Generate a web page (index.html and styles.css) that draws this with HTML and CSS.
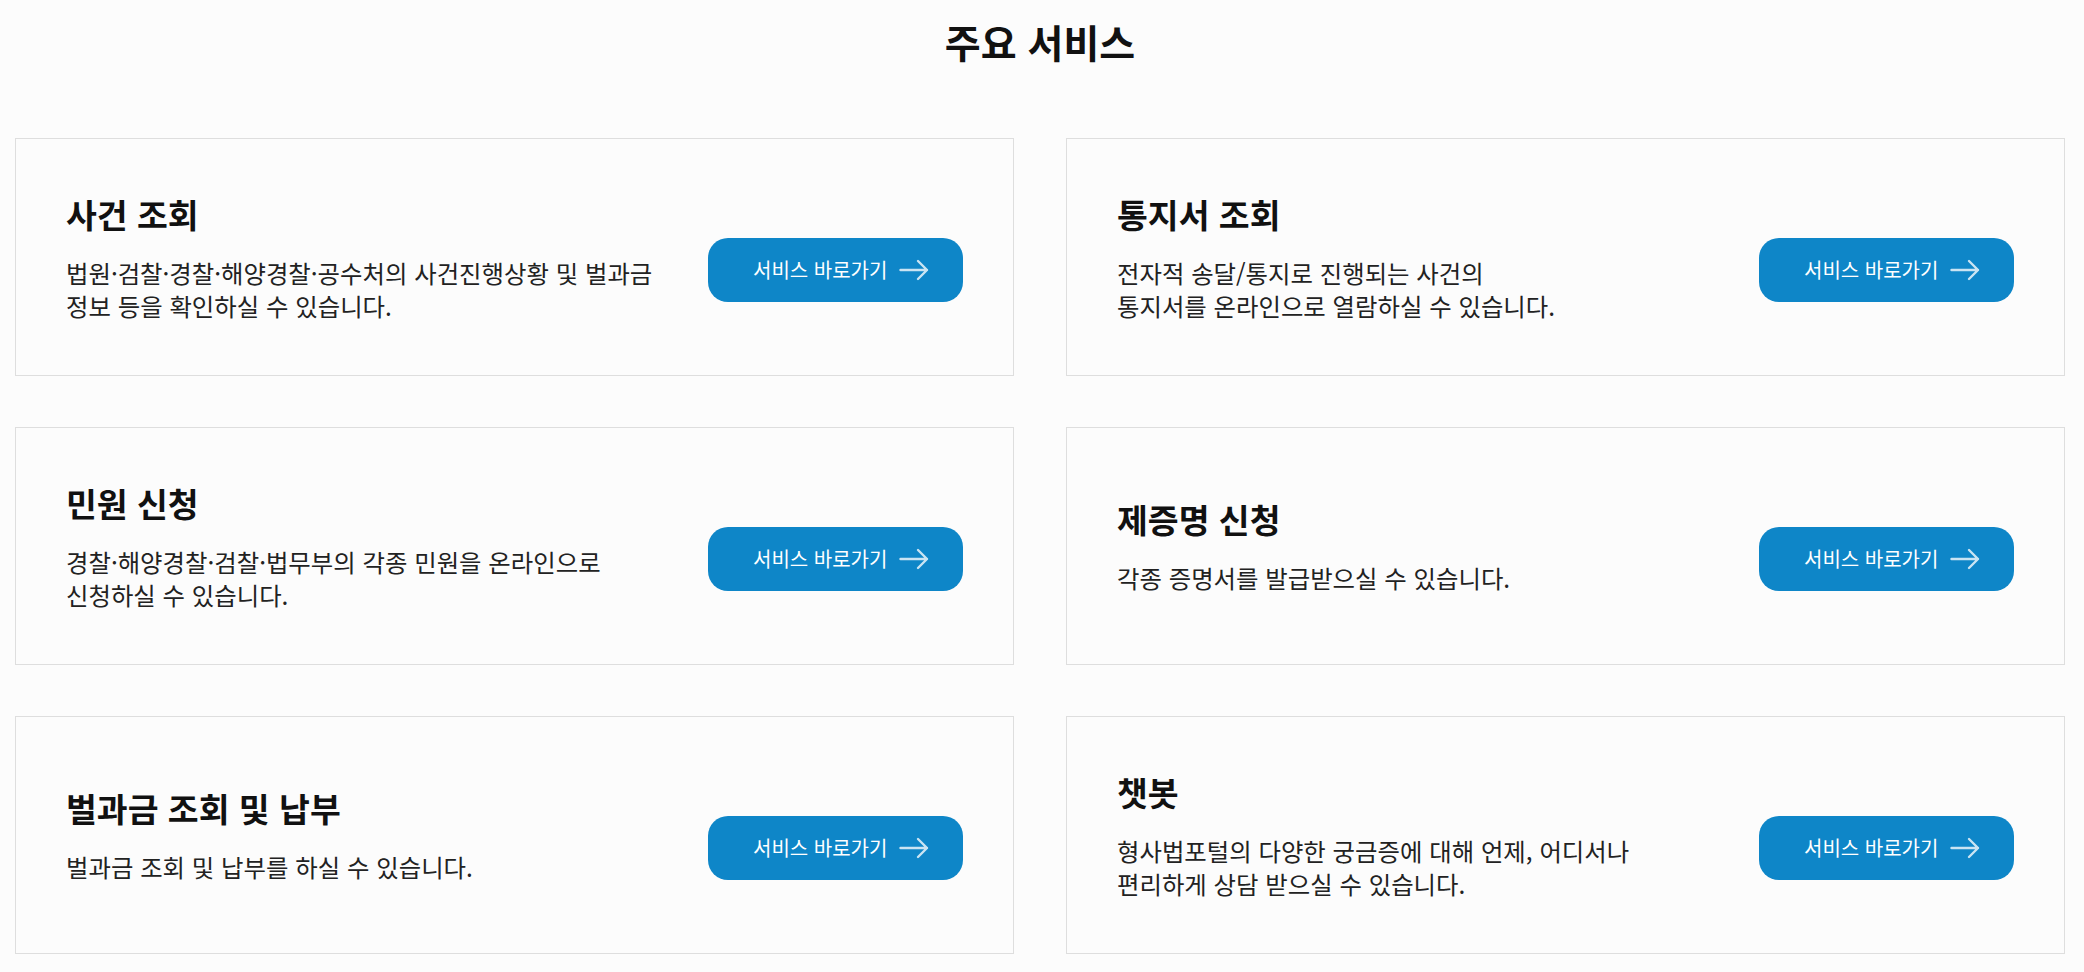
FILE: index.html
```html
<!DOCTYPE html>
<html lang="ko">
<head>
<meta charset="utf-8">
<title>주요 서비스</title>
<link rel="stylesheet" href="styles.css">
</head>
<body>
<main class="services">
  <h2 class="services-title">주요 서비스</h2>
  <ul class="services-grid">
    <li class="card">
      <div class="card-text">
        <h3 class="card-title">사건 조회</h3>
        <p class="card-desc">법원·검찰·경찰·해양경찰·공수처의 사건진행상황 및 벌과금<br>정보 등을 확인하실 수 있습니다.</p>
      </div>
      <a class="card-btn" href="#">서비스 바로가기<svg class="card-arrow" width="30" height="22" viewBox="0 0 30 22"><path d="M1.5 11H28M19 2L28 11L19 20" fill="none" stroke="currentColor" stroke-width="2.4" stroke-linecap="round" stroke-linejoin="round"/></svg></a>
    </li>
    <li class="card">
      <div class="card-text">
        <h3 class="card-title">통지서 조회</h3>
        <p class="card-desc">전자적 송달/통지로 진행되는 사건의<br>통지서를 온라인으로 열람하실 수 있습니다.</p>
      </div>
      <a class="card-btn" href="#">서비스 바로가기<svg class="card-arrow" width="30" height="22" viewBox="0 0 30 22"><path d="M1.5 11H28M19 2L28 11L19 20" fill="none" stroke="currentColor" stroke-width="2.4" stroke-linecap="round" stroke-linejoin="round"/></svg></a>
    </li>
    <li class="card">
      <div class="card-text">
        <h3 class="card-title">민원 신청</h3>
        <p class="card-desc">경찰·해양경찰·검찰·법무부의 각종 민원을 온라인으로<br>신청하실 수 있습니다.</p>
      </div>
      <a class="card-btn" href="#">서비스 바로가기<svg class="card-arrow" width="30" height="22" viewBox="0 0 30 22"><path d="M1.5 11H28M19 2L28 11L19 20" fill="none" stroke="currentColor" stroke-width="2.4" stroke-linecap="round" stroke-linejoin="round"/></svg></a>
    </li>
    <li class="card">
      <div class="card-text">
        <h3 class="card-title">제증명 신청</h3>
        <p class="card-desc">각종 증명서를 발급받으실 수 있습니다.</p>
      </div>
      <a class="card-btn" href="#">서비스 바로가기<svg class="card-arrow" width="30" height="22" viewBox="0 0 30 22"><path d="M1.5 11H28M19 2L28 11L19 20" fill="none" stroke="currentColor" stroke-width="2.4" stroke-linecap="round" stroke-linejoin="round"/></svg></a>
    </li>
    <li class="card">
      <div class="card-text">
        <h3 class="card-title">벌과금 조회 및 납부</h3>
        <p class="card-desc">벌과금 조회 및 납부를 하실 수 있습니다.</p>
      </div>
      <a class="card-btn" href="#">서비스 바로가기<svg class="card-arrow" width="30" height="22" viewBox="0 0 30 22"><path d="M1.5 11H28M19 2L28 11L19 20" fill="none" stroke="currentColor" stroke-width="2.4" stroke-linecap="round" stroke-linejoin="round"/></svg></a>
    </li>
    <li class="card">
      <div class="card-text">
        <h3 class="card-title">챗봇</h3>
        <p class="card-desc">형사법포털의 다양한 궁금증에 대해 언제, 어디서나<br>편리하게 상담 받으실 수 있습니다.</p>
      </div>
      <a class="card-btn" href="#">서비스 바로가기<svg class="card-arrow" width="30" height="22" viewBox="0 0 30 22"><path d="M1.5 11H28M19 2L28 11L19 20" fill="none" stroke="currentColor" stroke-width="2.4" stroke-linecap="round" stroke-linejoin="round"/></svg></a>
    </li>
  </ul>
</main>
</body>
</html>
```
FILE: styles.css
```css
* { box-sizing: border-box; }

html, body {
  margin: 0;
  padding: 0;
  background: #fcfcfc;
}

body {
  font-family: "Noto Sans CJK KR", "Noto Sans", sans-serif;
  color: #111;
}

.services {
  width: 2050px;
  margin-left: 15px;
  padding-top: 14px;
}

.services-title {
  margin: 0 0 70px;
  font-size: 39px;
  font-weight: 700;
  line-height: 54px;
  text-align: center;
  color: #111;
}

.services-grid {
  list-style: none;
  margin: 0;
  padding: 0;
  display: grid;
  grid-template-columns: 1fr 1fr;
  column-gap: 52px;
  row-gap: 51px;
}

.card {
  height: 238px;
  border: 1px solid #dedede;
  background: #fcfcfc;
  padding: 0 50px;
  display: flex;
  align-items: center;
  justify-content: space-between;
}

.card-text {
  margin-top: -2px;
}

.card-title {
  margin: 0 0 20px;
  font-size: 33.5px;
  font-weight: 700;
  line-height: 45px;
  color: #111;
}

.card-desc {
  margin: 0;
  font-size: 24.4px;
  line-height: 33px;
  color: #222;
  white-space: nowrap;
}

.card-btn {
  flex: none;
  width: 255px;
  height: 64px;
  margin-top: 25px;
  padding: 0 30px 0 45px;
  border-radius: 20px;
  background: #0e86c8;
  color: #fff;
  font-size: 20px;
  text-decoration: none;
  display: flex;
  align-items: center;
  gap: 12px;
}

.card-arrow {
  flex: none;
  color: rgba(255, 255, 255, 0.78);
}
```
